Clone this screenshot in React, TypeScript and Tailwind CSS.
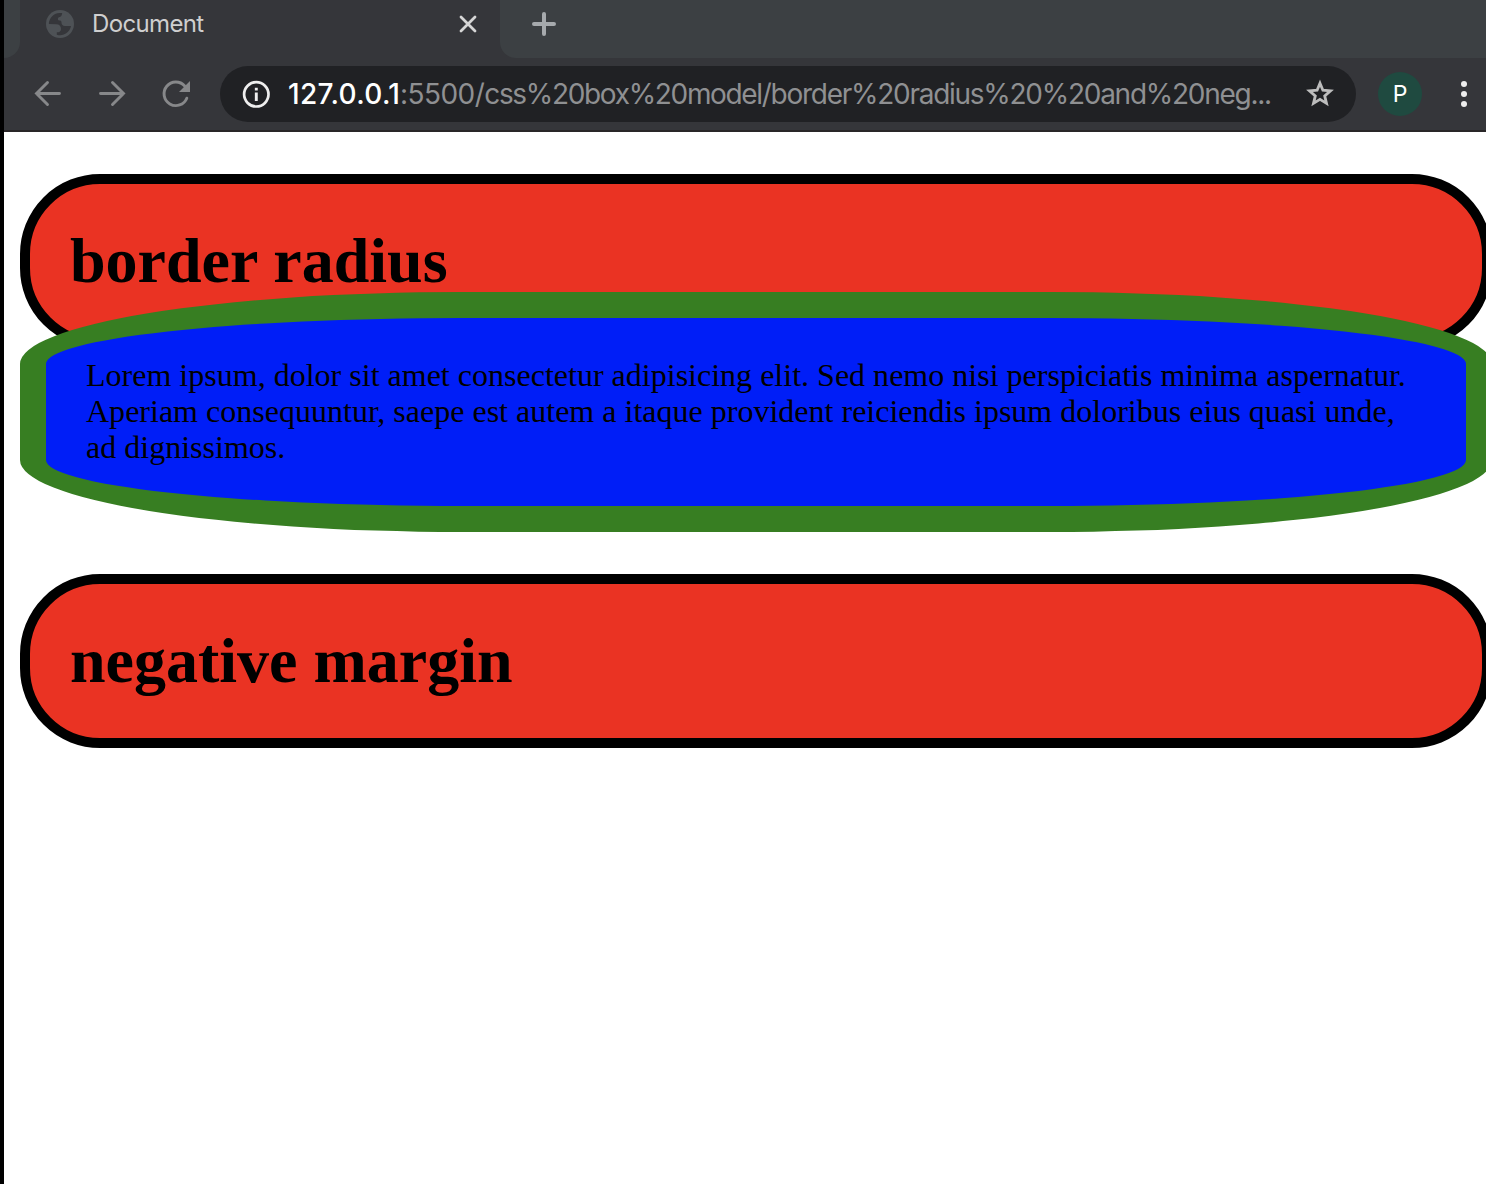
import React from 'react';

function TabStrip() {
  return (
    <div className="flex h-[58px] bg-[#35363a]">
      <div className="w-4 rounded-br-2xl bg-[#3c4043]" />
      <div className="flex h-12 w-[480px] items-center pr-[22px] pl-6">
        <svg className="size-8" viewBox="0 0 32 32">
          <circle cx="16" cy="16" r="14" fill="#4e5256" />
          <path
            d="M4.9 16A11.1 11.1 0 0 1 18.2 5.1c-.3 2.2-1 3.5-2.4 3.9-1.4.4-2 1.2-1.9 2.2.1 1 1 1.3 2.1 1.4 1.3.2 1.5 1 1.5 2.2 0 2 1.3 3.2 3.4 3.2h6.1A11.1 11.1 0 0 1 12.8 26.7v-2.5c2.2.2 4.2-.8 4.2-3.3 0-2.7-1.9-4.6-4.6-4.6z"
            fill="#35363a"
          />
        </svg>
        <span className="ml-4 flex-1 font-['Inter'] text-[24px] leading-8 tracking-[-0.65px] text-[#cfcfcf]">
          Document
        </span>
        <svg className="size-5" viewBox="0 0 20 20" fill="none" stroke="#d6d6d6" strokeWidth="2.8" strokeLinecap="round">
          <path d="M3 3l14 14M17 3L3 17" />
        </svg>
      </div>
      <div className="flex-1 rounded-bl-2xl bg-[#3c4043] pt-3 pl-8">
        <svg className="size-6" viewBox="0 0 24 24" fill="none" stroke="#a6aaad" strokeWidth="4" strokeLinecap="round">
          <path d="M12 2v20M2 12h20" />
        </svg>
      </div>
    </div>
  );
}

function Toolbar() {
  return (
    <div className="flex h-[74px] items-start border-b-2 border-[#292628] bg-[#35363a] pt-2 font-['Inter']">
      <div className="flex h-14 w-[216px] items-center pl-7">
        <svg className="size-8" viewBox="0 0 32 32" fill="none" stroke="#87888a" strokeWidth="2.9" strokeLinecap="round">
          <path d="M27.5 15.5H4.5M15.5 4.5L4.5 15.5l11 11" />
        </svg>
        <svg className="ml-8 size-8" viewBox="0 0 32 32" fill="none" stroke="#87888a" strokeWidth="2.9" strokeLinecap="round">
          <path d="M4.5 15.5h23M16.5 4.5l11 11-11 11" />
        </svg>
        <svg className="ml-8 size-8" viewBox="0 0 32 32" fill="none">
          <path d="M26.8 20.2A11.8 11.8 0 1 1 24.7 8" stroke="#87888a" strokeWidth="2.9" strokeLinecap="round" />
          <path d="M30 3v11H19z" fill="#87888a" />
        </svg>
      </div>
      <div className="flex h-14 w-[1136px] items-center rounded-full bg-[#202124] pr-5 pl-[22px]">
        <svg className="size-7" viewBox="0 0 28 28" fill="none">
          <circle cx="14.3" cy="14.3" r="12.2" stroke="#eeeeee" strokeWidth="2.7" />
          <path d="M14.3 12.5v8.5M14.3 7.7v2.8" stroke="#eeeeee" strokeWidth="2.9" />
        </svg>
        <div className="ml-[18px] flex flex-1 text-[28px] leading-9 whitespace-nowrap text-[#8f9092]">
          <span className="w-[112px] font-medium tracking-[0.35px] text-white">127.0.0.1</span>
          <span className="tracking-[-0.55px]">:5500/</span>
          <span className="tracking-[-1.33px]">css%20box%20model/</span>
          <span className="tracking-[-1.27px]">border%20radius%20%20and%20neg...</span>
        </div>
        <svg className="size-8" viewBox="0 0 32 32" fill="none" stroke="#bdbdbd" strokeWidth="2.8">
          <path d="M16 5.2l2.9 7 7.6.7-5.8 5 1.8 7.5-6.5-4-6.5 4 1.8-7.5-5.8-5 7.6-.7z" />
        </svg>
      </div>
      <div className="mt-1.5 ml-[22px] flex size-11 items-center justify-center rounded-full bg-[#1f4a40] text-[23px] leading-none text-white">
        P
      </div>
      <div className="mt-[15px] ml-[39px] flex flex-col gap-1">
        <span className="size-1.5 rounded-full bg-[#eeeeee]" />
        <span className="size-1.5 rounded-full bg-[#eeeeee]" />
        <span className="size-1.5 rounded-full bg-[#eeeeee]" />
      </div>
    </div>
  );
}

function Heading({ children }: { children: React.ReactNode }) {
  return (
    <h1 className="h-[174px] w-[1472px] rounded-[80px] border-[10px] border-black bg-[#ea3323] p-10 text-[64px] leading-[74px] font-bold">
      {children}
    </h1>
  );
}

export default function App() {
  return (
    <div className="h-[1184px] w-[1486px] overflow-hidden border-l-4 border-black bg-white text-black">
      <TabStrip />
      <Toolbar />
      <main className="pt-[42px] pl-4 font-['Liberation_Serif',serif]">
        <Heading>border radius</Heading>
        <p className="relative -mt-14 mb-[42px] h-[240px] w-[1472px] rounded-[30%] border-[26px] border-[#377e22] bg-[#001ef7] px-10 pt-[39px] text-[32px] leading-9 tracking-[0.01px] whitespace-nowrap">
          Lorem ipsum, dolor sit amet consectetur adipisicing elit. Sed nemo nisi perspiciatis minima aspernatur.
          <br />
          Aperiam consequuntur, saepe est autem a itaque provident reiciendis ipsum doloribus eius quasi unde,
          <br />
          ad dignissimos.
        </p>
        <Heading>negative margin</Heading>
      </main>
    </div>
  );
}
